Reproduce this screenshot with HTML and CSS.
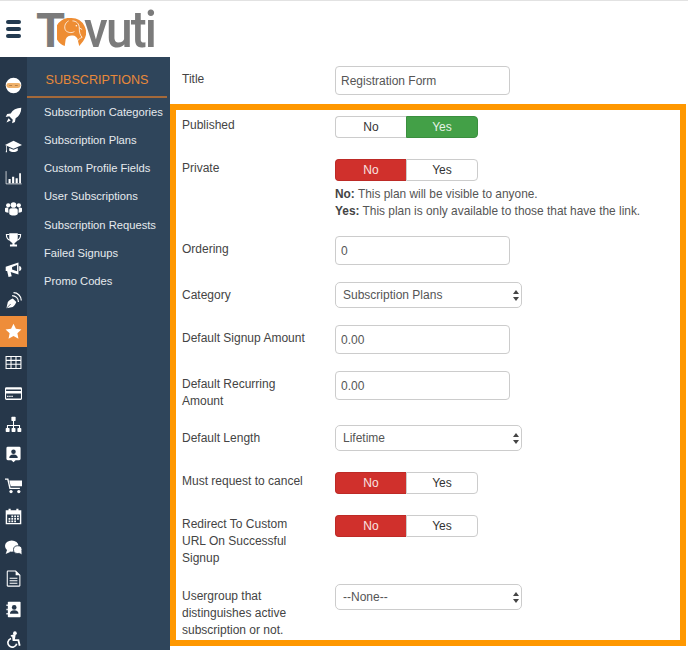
FILE: index.html
```html
<!DOCTYPE html>
<html lang="en">
<head>
<meta charset="utf-8">
<title>Subscriptions</title>
<link rel="stylesheet" href="styles.css">
</head>
<body>
<header class="topbar">
  <div class="burger"><i></i><i></i><i></i></div>
  <div class="logo">
    <span class="logo-t">T</span>
    <svg class="logo-o" viewBox="0 0 30 30"><path fill="#ee8d33" d="M15 0a15 15 0 0 1 12 24l-4 5-2-8c-2-3-4-3-6-3s-5 1-6 4l-1 7A15 15 0 0 1 15 0z"/><path fill="none" stroke="#fff" stroke-width=".8" d="M12 3c-4 2-5 7-3 10 2 2 6 3 9 1M16 3c4 0 7 3 7 7 0 5 1 8 3 10-2 1-4 2-5 4M23 10l3 2"/><circle cx="20" cy="8" r=".8" fill="#fff"/></svg>
    <span class="logo-rest">vuti</span>
  </div>
</header>
<div class="layout">
  <nav class="rail">
    <div class="rail-item"><svg viewBox="0 0 24 24"><circle cx="12" cy="12" r="11" fill="#fff"/><rect x="2" y="8.500" width="20" height="7" rx="3.500" fill="#eeb06a"/><path d="M6 12h4M14 12h4" stroke="#9a6a3a" stroke-width="1"/></svg></div>
    <div class="rail-item"><svg viewBox="0 0 24 24"><path fill="#fff" d="M23 1c-7 0-12 3-15 8l-5 1-2 4 5-1 5 5-1 5 4-2 1-5c5-3 8-8 8-15z"/><path fill="#fff" d="M5 16l3 3-6 3z"/></svg></div>
    <div class="rail-item"><svg viewBox="0 0 24 24"><path fill="#fff" d="M12 4L0 10l12 5 12-5z"/><path fill="#fff" d="M6 14v4c3 2.500 9 2.500 12 0v-4l-6 2.500z"/><path fill="#fff" d="M1.500 11h1v6l.5 3H1l.5-3z"/></svg></div>
    <div class="rail-item"><svg viewBox="0 0 24 24"><path fill="none" stroke="#fff" stroke-width="1" d="M1.500 3v18h22"/><path fill="#fff" d="M5 14h3v6H5zM10 11h3v9h-3zM15 13h3v7h-3zM20 6h2.500v14H20z"/></svg></div>
    <div class="rail-item"><svg viewBox="0 0 24 24"><circle cx="12" cy="7" r="4" fill="#fff"/><circle cx="4.500" cy="7.500" r="3" fill="#fff"/><circle cx="19.500" cy="7.500" r="3" fill="#fff"/><path fill="#fff" d="M6 14c0-2 2-2.500 6-2.500s6 .5 6 2.500v5c0 2-3 3-6 3s-6-1-6-3z"/><path fill="#fff" d="M0 12c0-1 2-1.500 4.500-1.500L5 18c-3 0-5-1-5-2zM24 12c0-1-2-1.500-4.500-1.500L19 18c3 0 5-1 5-2z"/></svg></div>
    <div class="rail-item"><svg viewBox="0 0 24 24"><path fill="#fff" d="M6 3h12v7c0 4-2 6-4.500 7v2H17v3H7v-3h3.500v-2C8 16 6 14 6 10z"/><path fill="none" stroke="#fff" stroke-width="1.600" d="M6 5H2c0 4 1.500 7 5 8M18 5h4c0 4-1.500 7-5 8"/></svg></div>
    <div class="rail-item"><svg viewBox="0 0 24 24"><path fill="#fff" d="M1 8l18-6v17L8 15.500l1.500 6-4.500 1-2-8.500H1z"/><path fill="#26374a" d="M10 8.500l7-3v9l-7-2.500z"/><path fill="#fff" d="M20 7c2 0 3 1.500 3 3.500S22 14 20 14z"/></svg></div>
    <div class="rail-item"><svg viewBox="0 0 24 24"><path fill="#fff" d="M2 23l2-9c2-3 5-4 7-5l5 5c-1 2-2 5-5 7z"/><path fill="none" stroke="#26374a" stroke-width="1" d="M2 23l6-6"/><path fill="none" stroke="#fff" stroke-width="1.700" d="M10 5c5 0 9 4 9 9M12 1c6 0 11 5 11 11"/></svg></div>
    <div class="rail-item rail-active"><svg viewBox="0 0 24 24"><path fill="#fff" d="M12 1l3.400 7.200 7.800 1-5.700 5.400 1.500 7.800L12 18.500l-7 3.900 1.500-7.800L.8 9.200l7.800-1z"/></svg></div>
    <div class="rail-item"><svg viewBox="0 0 24 24"><path fill="none" stroke="#fff" stroke-width="1.500" d="M1.500 3.500h21v17h-21zM1.500 9h21M1.500 14.500h21M8.500 3.500v17M15.500 3.500v17"/></svg></div>
    <div class="rail-item"><svg viewBox="0 0 24 24"><path fill="#fff" fill-rule="evenodd" d="M2 3h20a2 2 0 0 1 2 2v14a2 2 0 0 1-2 2H2a2 2 0 0 1-2-2V5a2 2 0 0 1 2-2zm-.5 3.500v2h21v-2zm0 5.500v7h21v-7z"/><path fill="#fff" d="M3 15h2v2H3zM6 15h2v2H6zM9 15h2v2H9z"/></svg></div>
    <div class="rail-item"><svg viewBox="0 0 24 24"><path fill="none" stroke="#fff" stroke-width="1.500" d="M12 7v6M3.500 18v-4.500h17V18M12 13v5"/><rect x="9" y="1" width="6" height="6" rx="1" fill="#fff"/><rect x="1" y="17" width="5.500" height="5.500" rx="1" fill="#fff"/><rect x="9.300" y="17" width="5.500" height="5.500" rx="1" fill="#fff"/><rect x="17.500" y="17" width="5.500" height="5.500" rx="1" fill="#fff"/></svg></div>
    <div class="rail-item"><svg viewBox="0 0 24 24"><path fill="#fff" d="M4 1h16a2 2 0 0 1 2 2v15a2 2 0 0 1-2 2h-5l-3 3-3-3H4a2 2 0 0 1-2-2V3a2 2 0 0 1 2-2z"/><circle cx="12" cy="8" r="3.200" fill="#26374a"/><path fill="#26374a" d="M6 17c0-3 2-5 6-5s6 2 6 5z"/></svg></div>
    <div class="rail-item"><svg viewBox="0 0 24 24"><path fill="none" stroke="#fff" stroke-width="2" d="M0 3h4l3 13h14"/><path fill="#fff" d="M6 5h18v8H8z"/><circle cx="8.500" cy="20.500" r="2.300" fill="#fff"/><circle cx="19.500" cy="20.500" r="2.300" fill="#fff"/></svg></div>
    <div class="rail-item"><svg viewBox="0 0 24 24"><path fill="#fff" fill-rule="evenodd" d="M1 3h4V1h3v2h8V1h3v2h4v20H1zm2 6v12h18V9z"/><path fill="#fff" d="M9 10.500h2.500V13H9zM13 10.500h2.500V13H13zM17 10.500h2.500V13H17zM5 14h2.500v2.500H5zM9 14h2.500v2.500H9zM13 14h2.500v2.500H13zM17 14h2.500v2.500H17zM5 17.500h2.500V20H5zM9 17.500h2.500V20H9zM13 17.500h2.500V20H13z"/></svg></div>
    <div class="rail-item"><svg viewBox="0 0 24 24"><ellipse cx="9.500" cy="10" rx="9.500" ry="8" fill="#fff"/><path fill="#fff" d="M3 15l-2 6 7-3z"/><ellipse cx="18" cy="15" rx="6" ry="5.500" fill="#fff" stroke="#26374a" stroke-width="1.200"/><path fill="#fff" d="M20 19l3.500 3-.5-5z"/></svg></div>
    <div class="rail-item"><svg viewBox="0 0 24 24"><path fill="none" stroke="#fff" stroke-width="1.500" d="M4 1.500h11l6 6V22a.8.8 0 0 1-.8.8H4a.8.8 0 0 1-.8-.8V2.300a.8.8 0 0 1 .8-.8z"/><path fill="#fff" d="M15 1.500l6 6h-6zM6.500 11h11v1.500h-11zM6.500 14.500h11V16h-11zM6.500 18h11v1.500h-11z"/></svg></div>
    <div class="rail-item"><svg viewBox="0 0 24 24"><path fill="#fff" d="M5 1h16a1 1 0 0 1 1 1v20a1 1 0 0 1-1 1H5a1 1 0 0 1-1-1V2a1 1 0 0 1 1-1z"/><path fill="#fff" d="M2 5h2v2H2zM2 11h2v2H2zM2 17h2v2H2z"/><circle cx="13" cy="9" r="3.300" fill="#26374a"/><path fill="#26374a" d="M7 18c0-3 2-5 6-5s6 2 6 5z"/></svg></div>
    <div class="rail-item"><svg viewBox="0 0 24 24"><circle cx="14" cy="3" r="2.600" fill="#fff"/><path fill="#fff" d="M8 6l5-1.500 2 1-1 6h6l2 9-2.500.6-1.700-7h-7L10 7.600 8.500 8z"/><path fill="none" stroke="#fff" stroke-width="2.300" d="M8.500 10.500a6.300 6.300 0 1 0 8 7.500"/></svg></div>
  </nav>
  <aside class="submenu">
    <h2 class="submenu-title">SUBSCRIPTIONS</h2>
    <ul class="submenu-list">
      <li>Subscription Categories</li>
      <li>Subscription Plans</li>
      <li>Custom Profile Fields</li>
      <li>User Subscriptions</li>
      <li>Subscription Requests</li>
      <li>Failed Signups</li>
      <li>Promo Codes</li>
    </ul>
  </aside>
  <main class="content">
    <div class="row title-row">
      <label class="label label-input">Title</label>
      <input class="field" type="text" value="Registration Form">
    </div>
    <section class="frame">
      <div class="row row-toggle">
        <span class="label">Published</span>
        <div class="toggle"><span class="opt">No</span><span class="opt opt-green">Yes</span></div>
      </div>
      <div class="row row-private">
        <span class="label">Private</span>
        <div>
          <div class="toggle"><span class="opt opt-red">No</span><span class="opt">Yes</span></div>
          <p class="help"><b>No:</b> This plan will be visible to anyone.<br><b>Yes:</b> This plan is only available to those that have the link.</p>
        </div>
      </div>
      <div class="row">
        <label class="label label-input">Ordering</label>
        <input class="field" type="text" value="0">
      </div>
      <div class="row">
        <label class="label label-input">Category</label>
        <div class="select-wrap">
          <select class="select"><option>Subscription Plans</option></select>
          <svg class="arrows" viewBox="0 0 6 11"><path d="M3 0l3 4H0zM3 11L0 7h6z"/></svg>
        </div>
      </div>
      <div class="row">
        <label class="label label-input">Default Signup Amount</label>
        <input class="field" type="text" value="0.00">
      </div>
      <div class="row row-recurring">
        <label class="label label-input">Default Recurring Amount</label>
        <input class="field" type="text" value="0.00">
      </div>
      <div class="row row-length">
        <label class="label label-input">Default Length</label>
        <div class="select-wrap">
          <select class="select"><option>Lifetime</option></select>
          <svg class="arrows" viewBox="0 0 6 11"><path d="M3 0l3 4H0zM3 11L0 7h6z"/></svg>
        </div>
      </div>
      <div class="row row-toggle">
        <span class="label">Must request to cancel</span>
        <div class="toggle"><span class="opt opt-red">No</span><span class="opt">Yes</span></div>
      </div>
      <div class="row">
        <span class="label">Redirect To Custom URL On Successful Signup</span>
        <div class="toggle"><span class="opt opt-red">No</span><span class="opt">Yes</span></div>
      </div>
      <div class="row row-last">
        <label class="label label-input">Usergroup that distinguishes active subscription or not.</label>
        <div class="select-wrap">
          <select class="select"><option>--None--</option></select>
          <svg class="arrows" viewBox="0 0 6 11"><path d="M3 0l3 4H0zM3 11L0 7h6z"/></svg>
        </div>
      </div>
    </section>
  </main>
</div>
</body>
</html>
```

FILE: styles.css
```css
* { box-sizing: border-box; }
html, body { margin: 0; padding: 0; }
body {
  width: 688px;
  height: 650px;
  overflow: hidden;
  background: #fff;
  color: #444;
  font-family: "Liberation Sans", Arial, sans-serif;
  font-size: 12px;
  line-height: 17px;
  display: flex;
  flex-direction: column;
}
.topbar {
  height: 57px;
  flex: none;
  border-top: 1px solid #e2e2e2;
  display: flex;
  align-items: flex-start;
  padding: 19px 0 0 6px;
}
.burger { width: 15px; display: flex; flex-direction: column; gap: 3px; }
.burger i { display: block; height: 4px; border-radius: 2px; background: #233a50; }
.logo {
  margin: -8px 0 0 15px;
  display: flex;
  align-items: flex-start;
  color: #7b7b7b;
  height: 37px;
}
.logo-t {
  font-family: Roboto, sans-serif;
  font-weight: 700;
  font-size: 48px;
  line-height: 37px;
  width: 21px;
  transform-origin: 0 50%;
  transform: scaleX(.98);
}
.logo-o { width: 29px; height: 29px; margin-top: 6px; flex: none; }
.logo-rest {
  font-family: Roboto, sans-serif;
  font-weight: 500;
  font-size: 52px;
  line-height: 37px;
  letter-spacing: -2px;
  margin: -1px 0 0 -2px;
  transform-origin: 0 50%;
  transform: scaleX(.92);
}
.layout { flex: 1; display: flex; min-height: 0; }
.rail {
  width: 27px;
  flex: none;
  background: #26374a;
  padding-top: 12.6px;
  display: flex;
  flex-direction: column;
}
.rail-item {
  height: 30.83px;
  flex: none;
  display: flex;
  align-items: center;
  justify-content: center;
}
.rail-item svg { width: 17px; height: 17px; display: block; }
.rail-active { background: #ee8d3a; }
.submenu { width: 143px; flex: none; background: #2f455b; }
.submenu-title {
  margin: 0 3px 0 0;
  height: 41px;
  padding-top: 15px;
  text-align: center;
  font-size: 12.6px;
  font-weight: 400;
  line-height: 17px;
  color: #e8893a;
  border-bottom: 2px solid #a4693a;
}
.submenu-list { list-style: none; margin: 0; padding: 0 0 0 17px; }
.submenu-list li {
  height: 28.15px;
  line-height: 28px;
  font-size: 11.2px;
  color: #e6eaee;
  white-space: nowrap;
}
.content { flex: 1; min-width: 0; }
.row { display: flex; align-items: flex-start; margin-bottom: 17px; }
.title-row { padding: 9px 0 9px 12px; margin: 0; }
.frame {
  height: 542px;
  margin-right: 2px;
  border: 6px solid #ff9800;
  padding: 6px 0 0 6px;
}
.row-toggle { margin-bottom: 21px; }
.row-private { margin-bottom: 16px; }
.row-recurring { margin-bottom: 15.5px; }
.row-length { margin-bottom: 21px; }
.row-last { margin-bottom: 0; }
.label { width: 153px; flex: none; padding: .5px 30px 0 0; display: block; color: #444; }
.label-input { padding-top: 4.5px; }
.field {
  width: 175px;
  height: 29px;
  padding: 0 5px;
  border: 1px solid #ccc;
  border-radius: 4px;
  background: #fff;
  color: #555;
  font: 12px "Liberation Sans", Arial, sans-serif;
}
.toggle { display: flex; width: 143px; height: 22px; }
.opt {
  flex: 1;
  display: flex;
  align-items: center;
  justify-content: center;
  border: 1px solid #ccc;
  color: #333;
  font-size: 12px;
}
.opt:first-child { border-radius: 4px 0 0 4px; border-right: 0; }
.opt:last-child { border-radius: 0 4px 4px 0; }
.opt-green { background: #43a047; border-color: #3b8f3f; color: #e6f3e6; }
.opt-red { background: #d0302c; border-color: #bd2a26; color: #f8e4e3; }
.help { margin: 5px 0 0; color: #555; font-size: 11.9px; line-height: 17px; white-space: nowrap; }
.help b { color: #444; }
.select-wrap { position: relative; width: 187px; height: 26px; }
.select {
  appearance: none;
  width: 100%;
  height: 100%;
  padding: 0 7px;
  border: 1px solid #ccc;
  border-radius: 5px;
  background: #fff;
  color: #555;
  font: 12px "Liberation Sans", Arial, sans-serif;
}
.arrows { position: absolute; right: 3px; top: 8px; width: 6px; height: 11px; fill: #444; }
```
